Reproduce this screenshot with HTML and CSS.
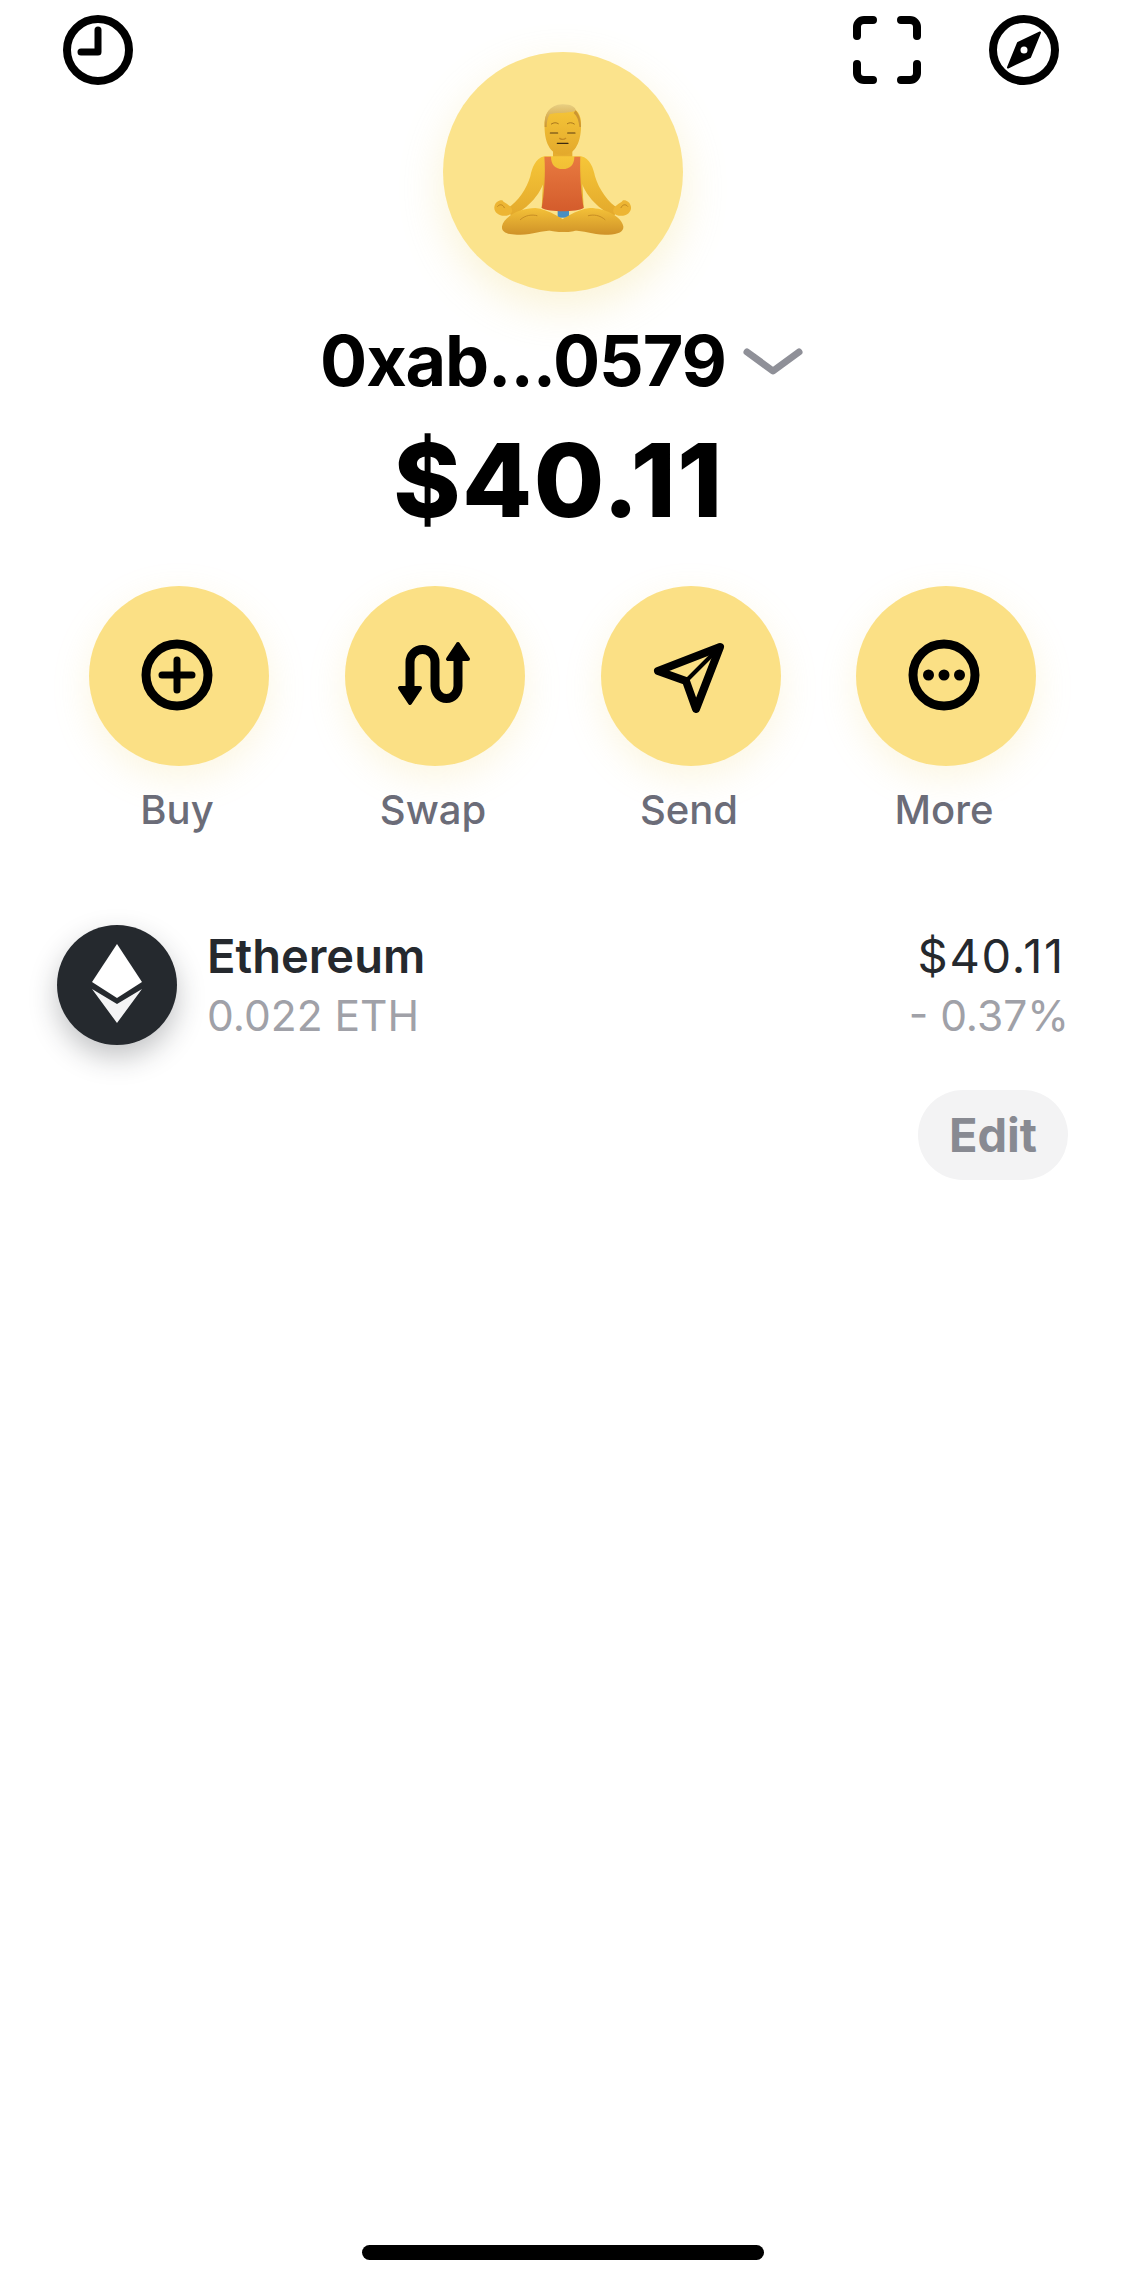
FILE: index.html
```html
<!DOCTYPE html>
<html lang="en">
<head>
  <meta charset="UTF-8">
  <title>Wallet</title>
  <link rel="stylesheet" href="styles.css">
</head>
<body>
  <div class="page">

    <!-- Top icons -->
    <div class="top-bar">
      <svg class="top-icon" viewBox="0 0 70 70">
        <circle cx="35" cy="35" r="31" fill="none" stroke="#000" stroke-width="8"/>
        <path d="M35 15V37H18" fill="none" stroke="#000" stroke-width="7" stroke-linecap="round" stroke-linejoin="round"/>
      </svg>
      <div class="top-right">
        <svg class="top-icon" viewBox="0 0 70 70">
          <path d="M5 21V12A7 7 0 0 1 12 5H21M49 5H58A7 7 0 0 1 65 12V21M65 49V58A7 7 0 0 1 58 65H49M21 65H12A7 7 0 0 1 5 58V49" fill="none" stroke="#000" stroke-width="8" stroke-linecap="round"/>
        </svg>
        <svg class="top-icon" viewBox="0 0 70 70">
          <circle cx="35" cy="35" r="31" fill="none" stroke="#000" stroke-width="8"/>
          <path fill-rule="evenodd" d="M51 17.500L41 42 19 52.500 29 28ZM35 30.500A4.500 4.500 0 1 0 35 39.500 4.500 4.500 0 1 0 35 30.500Z" fill="#000" stroke="#000" stroke-width="2" stroke-linejoin="round"/>
        </svg>
      </div>
    </div>

    <!-- Avatar, drawn in reference crop coordinates -->
    <div class="avatar">
      <svg viewBox="68 37 720 720" width="240" height="240">
        <defs>
          <linearGradient id="skin" x1="0" y1="0" x2="0" y2="1">
            <stop offset="0" stop-color="#f6c638"/>
            <stop offset="1" stop-color="#e3a92c"/>
          </linearGradient>
          <linearGradient id="leg" x1="0" y1="0" x2="0" y2="1">
            <stop offset="0" stop-color="#f4c138"/>
            <stop offset="1" stop-color="#cf9228"/>
          </linearGradient>
          <linearGradient id="tank" x1="0" y1="0" x2="0" y2="1">
            <stop offset="0" stop-color="#e87a40"/>
            <stop offset="1" stop-color="#d45c2c"/>
          </linearGradient>
          <linearGradient id="hair" x1="0" y1="0" x2="0" y2="1">
            <stop offset="0" stop-color="#e8cf82"/>
            <stop offset="1" stop-color="#cc9632"/>
          </linearGradient>
          <g id="arm">
            <path d="M372 350C345 356 335 385 330 410C318 450 290 490 258 508L274 530C322 506 368 462 378 400Z" fill="url(#skin)"/>
            <path d="M222 502C224 486 238 480 246 482C250 490 258 490 264 496C278 506 280 518 266 526C244 534 220 522 222 502Z" fill="#edb533"/>
            <path d="M232 500C238 492 248 494 252 504" fill="none" stroke="#c28a22" stroke-width="3" stroke-linecap="round"/>
          </g>
          <g id="shin">
            <path d="M245 560C250 530 300 505 345 505C385 508 430 540 468 566C470 576 440 580 410 574C370 568 340 588 290 585C260 585 243 576 245 560Z" fill="url(#leg)"/>
            <path d="M300 540C315 526 335 524 350 528" fill="none" stroke="#c78e24" stroke-width="3" stroke-linecap="round"/>
          </g>
        </defs>
        <rect x="412" y="512" width="34" height="22" fill="#4a8ec2"/>
        <rect x="414" y="556" width="32" height="14" fill="#4a8ec2"/>
        <use href="#arm"/>
        <use href="#arm" transform="translate(854 0) scale(-1 1)"/>
        <rect x="398" y="325" width="58" height="40" fill="#e6ad2f"/>
        <path d="M372 350H482L490 505H364Z" fill="url(#skin)"/>
        <path d="M372 351H392C392 375 405 388 427 388C449 388 462 375 462 351H480C478 400 482 460 490 505C470 518 385 518 364 505C372 460 376 400 372 351Z" fill="url(#tank)"/>
        <use href="#shin" transform="translate(854 0) scale(-1 1)"/>
        <use href="#shin"/>
        <path d="M373 250C373 215 395 200 427 200C460 200 482 215 482 250C484 305 465 346 427 346C389 346 370 305 373 250Z" fill="url(#skin)"/>
        <path d="M373 262C370 222 388 196 425 194C450 193 468 202 466 214C440 222 405 218 388 224C381 236 379 250 379 262Z" fill="url(#hair)"/>
        <path d="M466 212C476 224 482 240 482 262L477 262C476 245 471 230 460 220Z" fill="#cc9632"/>
        <path d="M393 253C400 248 408 248 414 252M441 252C447 248 455 248 462 253" fill="none" stroke="#a9761d" stroke-width="3" stroke-linecap="round"/>
        <path d="M390 280H412M442 280H464" fill="none" stroke="#5b3d12" stroke-width="3.500" stroke-linecap="round"/>
        <path d="M418 296C424 300 431 300 436 296" fill="none" stroke="#c48a22" stroke-width="4" stroke-linecap="round"/>
        <path d="M411 311H443" fill="none" stroke="#3c2a10" stroke-width="4" stroke-linecap="round"/>
      </svg>
    </div>

    <!-- Account name and balance -->
    <div class="name-row">
      <span class="name">0xab...0579</span>
      <svg class="chevron" viewBox="0 0 60 28">
        <path d="M4 4L30 23 56 4" fill="none" stroke="#8f9098" stroke-width="7" stroke-linecap="round" stroke-linejoin="round"/>
      </svg>
    </div>
    <div class="balance">$40.11</div>

    <!-- Action buttons -->
    <div class="actions">
      <div class="action">
        <div class="action-btn">
          <svg viewBox="0 0 180 180">
            <circle cx="88" cy="89" r="31" fill="none" stroke="#000" stroke-width="9"/>
            <path d="M88 74V104M73 89H103" fill="none" stroke="#000" stroke-width="7" stroke-linecap="round"/>
          </svg>
        </div>
        <span class="action-label">Buy</span>
      </div>
      <div class="action">
        <div class="action-btn">
          <svg viewBox="0 0 180 180">
            <path d="M65 104V76A12.500 12.500 0 0 1 90 76V100A11.500 12.500 0 0 0 113 100V70" fill="none" stroke="#000" stroke-width="9"/>
            <path d="M55 102H75L65 117ZM103 73H123L113 58Z" fill="#000" stroke="#000" stroke-width="4" stroke-linejoin="round"/>
          </svg>
        </div>
        <span class="action-label">Swap</span>
      </div>
      <div class="action">
        <div class="action-btn">
          <svg viewBox="0 0 180 180">
            <path d="M119 61L57 85 85 95 95 123Z" fill="none" stroke="#000" stroke-width="8" stroke-linejoin="round"/>
            <path d="M119 61L85 95" fill="none" stroke="#000" stroke-width="4"/>
          </svg>
        </div>
        <span class="action-label">Send</span>
      </div>
      <div class="action">
        <div class="action-btn">
          <svg viewBox="0 0 180 180">
            <circle cx="88" cy="89" r="31" fill="none" stroke="#000" stroke-width="9"/>
            <circle cx="72.500" cy="89" r="5.500"/>
            <circle cx="88" cy="89" r="5.500"/>
            <circle cx="103.500" cy="89" r="5.500"/>
          </svg>
        </div>
        <span class="action-label">More</span>
      </div>
    </div>

    <!-- Token list -->
    <div class="token">
      <div class="token-icon">
        <svg viewBox="0 0 120 120" width="120" height="120">
          <path d="M60 19L85 57 60 73 35 57Z" fill="#fff"/>
          <path d="M35 64L60 79 85 64 60 98Z" fill="#f4f4f5"/>
        </svg>
      </div>
      <div class="token-info">
        <div class="token-name">Ethereum</div>
        <div class="token-sub">0.022 ETH</div>
      </div>
      <div class="token-values">
        <div class="token-price">$40.11</div>
        <div class="token-sub">- 0.37%</div>
      </div>
    </div>

    <div class="edit-row">
      <button class="edit-btn">Edit</button>
    </div>

    <div class="home-bar"></div>
  </div>
</body>
</html>
```

FILE: styles.css
```css
* {
  box-sizing: border-box;
}

body {
  margin: 0;
  background: #fff;
  font-family: "Inter", "Liberation Sans", sans-serif;
  color: #000;
}

.page {
  width: 1125px;
  height: 2284px;
  display: flex;
  flex-direction: column;
  overflow: hidden;
}

/* Top icons */
.top-bar {
  display: flex;
  justify-content: space-between;
  height: 85px;
  padding: 15px 66px 0 63px;
}

.top-right {
  display: flex;
  gap: 67px;
}

.top-icon {
  width: 70px;
  height: 70px;
}

/* Avatar */
.avatar {
  width: 240px;
  height: 240px;
  margin: -33px auto 0;
  border-radius: 50%;
  background: #fbe38c;
  box-shadow: 0 16px 44px rgba(240, 215, 120, 0.3);
}

.avatar svg {
  display: block;
}

/* Name and balance */
.name-row {
  display: flex;
  justify-content: center;
  align-items: center;
  gap: 17px;
  height: 80px;
  margin-top: 29px;
  padding-right: 2px;
}

.name {
  font-size: 70px;
  font-weight: 700;
  line-height: 80px;
  letter-spacing: -1.1px;
}

.chevron {
  width: 60px;
  height: 28px;
  margin-top: 2px;
}

.balance {
  height: 120px;
  padding-right: 8px;
  margin-top: 19px;
  font-size: 102px;
  font-weight: 800;
  line-height: 120px;
  letter-spacing: 1.500px;
  text-align: center;
}

/* Actions */
.actions {
  display: grid;
  grid-template-columns: repeat(3, 256px) 254px;
  margin-top: 46px;
  padding-left: 51px;
}

.action {
  display: flex;
  flex-direction: column;
  align-items: center;
}

.action-btn {
  width: 180px;
  height: 180px;
  border-radius: 50%;
  background: #fbe085;
  box-shadow: 0 12px 36px rgba(240, 215, 120, 0.22);
}

.action-btn svg {
  display: block;
  width: 180px;
  height: 180px;
}

.action-label {
  margin-top: 20px;
  padding-right: 4px;
  font-size: 40px;
  font-weight: 500;
  line-height: 48px;
  color: #6b6c78;
}

/* Token list */
.token {
  display: flex;
  align-items: center;
  height: 120px;
  margin-top: 91px;
  padding: 0 60px 0 57px;
}

.token-icon {
  width: 120px;
  height: 120px;
  border-radius: 50%;
  background: #25292e;
  box-shadow: 0 12px 28px rgba(37, 41, 46, 0.28);
}

.token-icon svg {
  display: block;
}

.token-info {
  margin-left: 30px;
  flex: 1;
}

.token-values {
  text-align: right;
}

.token-name {
  font-size: 47px;
  font-weight: 600;
  line-height: 54px;
  color: #25292e;
}

.token-price {
  font-size: 47px;
  font-weight: 400;
  line-height: 54px;
  letter-spacing: 1.8px;
  color: #25292e;
}

.token-sub {
  margin-top: 8px;
  font-size: 42.5px;
  font-weight: 400;
  line-height: 50px;
  color: #a0a1a8;
}

.token-values .token-sub {
  margin-right: -4px;
}

/* Edit */
.edit-row {
  display: flex;
  justify-content: flex-end;
  margin-top: 45px;
  padding-right: 57px;
}

.edit-btn {
  width: 150px;
  height: 90px;
  padding: 0 0 2px;
  border: none;
  border-radius: 45px;
  background: #f3f3f4;
  font-family: inherit;
  font-size: 47px;
  font-weight: 700;
  color: #888a92;
}

/* Home indicator */
.home-bar {
  width: 402px;
  height: 15px;
  margin: auto 0 24px 362px;
  border-radius: 8px;
  background: #000;
}
```
